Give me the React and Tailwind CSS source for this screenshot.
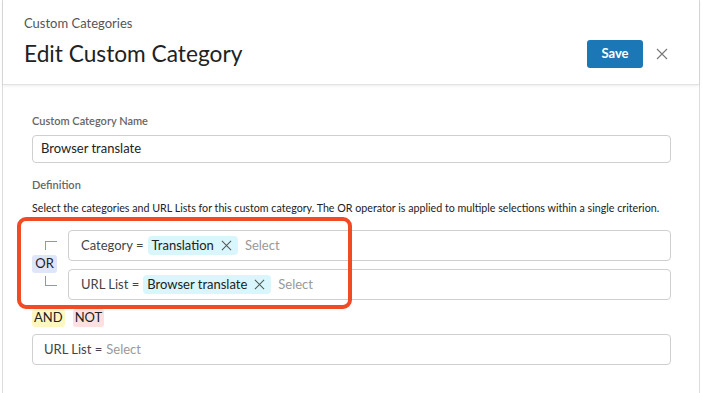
const font = { fontFamily: 'Lato, "Open Sans", sans-serif' }

export default function App() {
  return (
    <div className="relative flex h-[393px] w-[703px] overflow-hidden bg-white" style={font}>
      <div className="w-[2px] shrink-0 bg-white" />
      <div className="flex w-[698px] shrink-0 flex-col border-x border-[#dcdcdc] bg-white">
        <Header />
        <Body />
      </div>

      {/* annotation highlight drawn over the OR group */}
      <div className="pointer-events-none absolute left-[17px] top-[217px] h-[92px] w-[335px] rounded-[9px] border-4 border-[#f14b25]" />
    </div>
  )
}

function Header() {
  return (
    <div className="h-[85px] shrink-0 border-b border-[#e2e2e2] pl-[21px] pr-[30px] pt-[14px] shadow-[0_1px_3px_rgba(0,0,0,0.08)]">
      <div className="text-[13px] leading-[18px] text-[#555]">Custom Categories</div>
      <div className="mt-[6px] flex items-center">
        <h1 className="flex-1 text-[22.7px] leading-[32px] text-[#222]">Edit Custom Category</h1>
        <button className="h-[28px] w-[56px] rounded-[3px] bg-[#1c77b7] text-[13px] font-bold text-white">Save</button>
        <button className="ml-[12px] flex h-[14px] w-[14px] items-center justify-center text-[#777]" aria-label="Close">
          <Cross size={12} />
        </button>
      </div>
    </div>
  )
}

function Body() {
  return (
    <div className="flex-1 pl-[29px] pr-[28px] pt-[29px]">
      <Label>Custom Category Name</Label>
      <div className="mt-[7px] flex h-[28px] items-center rounded-[4px] border border-[#cfcfcf] px-[8px] text-[13px] text-[#222]">
        Browser translate
      </div>

      <Label className="mt-[15px]">Definition</Label>
      <p className="mt-[9px] whitespace-nowrap text-[10.7px] leading-[14px] text-[#222]">
        Select the categories and URL Lists for this custom category. The OR operator is applied to multiple selections within a single criterion.
      </p>

      <div className="mt-[15px] flex">
        <div className="flex w-[36px] shrink-0 flex-col pt-[11px]">
          <div className="ml-[13px] h-[9px] w-[12px] border-l border-t border-[#7c95ea]" />
          <span className="mt-[5px] flex h-[18px] w-[25px] items-center justify-center rounded-[3px] bg-[#e0e6fa] text-[13px] text-[#222]">OR</span>
          <div className="ml-[13px] mt-[3px] h-[10px] w-[12px] border-b border-l border-[#7c95ea]" />
        </div>
        <div className="flex flex-1 flex-col gap-[8px]">
          <Criterion label="Category =" value="Translation" />
          <Criterion label="URL List =" value="Browser translate" />
        </div>
      </div>

      <div className="mt-[9px] flex gap-[8px]">
        <span className="flex h-[18px] items-center rounded-[3px] bg-[#fff7c2] px-[2px] text-[13px] text-[#222]">AND</span>
        <span className="flex h-[18px] items-center rounded-[3px] bg-[#fde1e1] px-[2px] text-[13px] text-[#222]">NOT</span>
      </div>

      <div className="mt-[7px] flex h-[31px] items-center rounded-[4px] border border-[#cfcfcf] px-[11px] text-[13px]">
        <span className="text-[#444]">URL List =</span>
        <span className="ml-[4px] text-[#999]">Select</span>
      </div>
    </div>
  )
}

const Cross = ({ size }) => (
  <svg width={size} height={size} viewBox="0 0 12 12" fill="none" stroke="currentColor" strokeWidth="1.1">
    <path d="M1 1l10 10M11 1L1 11" />
  </svg>
)

const Label = ({ children, className = '' }) => (
  <div className={`text-[11px] font-semibold leading-[14px] text-[#666] ${className}`}>{children}</div>
)

const Criterion = ({ label, value }) => (
  <div className="flex h-[31px] items-center rounded-[4px] border border-[#cfcfcf] px-[12px] text-[13px]">
    <span className="text-[#444]">{label}</span>
    <span className="ml-[4px] flex h-[19px] items-center gap-[7px] rounded-[4px] bg-[#d8f6fb] pl-[4px] pr-[6px] text-[#222]">
      {value}
      <span className="text-[#555]"><Cross size={11} /></span>
    </span>
    <span className="ml-[7px] text-[#999]">Select</span>
  </div>
)
